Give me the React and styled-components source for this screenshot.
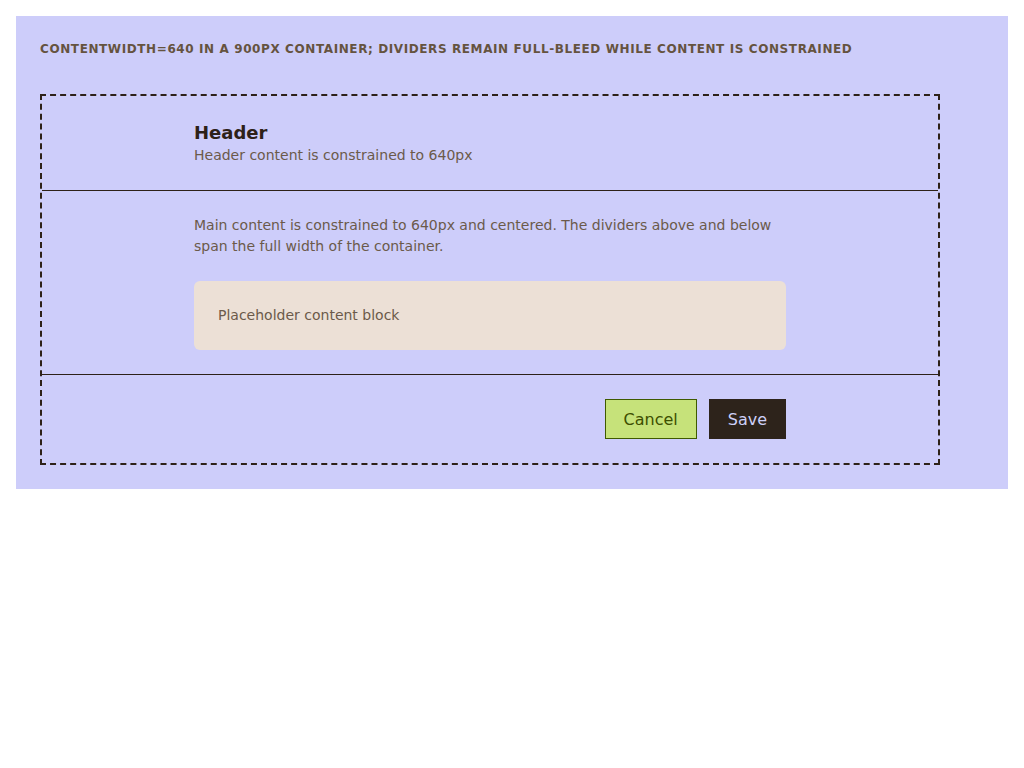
import React from 'react'
import styled, { createGlobalStyle } from 'styled-components'

const GlobalStyle = createGlobalStyle`
  * {
    box-sizing: border-box;
  }

  body {
    margin: 0;
    padding: 16px;
    background: #ffffff;
    font-family: "DejaVu Sans", Verdana, sans-serif;
  }
`

const Stage = styled.div`
  background: #cdcdfa;
  padding: 24px;
`

const Caption = styled.div`
  font-size: 12px;
  line-height: 18px;
  font-weight: 700;
  letter-spacing: 0.6px;
  text-transform: uppercase;
  color: #65533f;
  margin-bottom: 36px;
`

const Frame = styled.div`
  width: 900px;
  border: 2px dashed #2d2118;
  display: flex;
  flex-direction: column;
`

const Section = styled.section`
  border-top: ${p => (p.divider ? '1px solid #2d2118' : 'none')};
`

const Inner = styled.div`
  max-width: 640px;
  margin: 0 auto;
  padding: 24px;
  display: flex;
  flex-direction: column;
  align-items: ${p => (p.end ? 'flex-end' : 'stretch')};
`

const Title = styled.h2`
  margin: 0;
  font-size: 18px;
  line-height: 1.4;
  font-weight: 700;
  color: #2d2118;
`

const Subtitle = styled.p`
  margin: 0;
  font-size: 14px;
  line-height: 1.5;
  color: #6b5a4a;
`

const Text = styled.p`
  margin: 0 0 24px;
  font-size: 14px;
  line-height: 1.5;
  color: #6b5a4a;
`

const Placeholder = styled.div`
  background: #ece0d6;
  border-radius: 6px;
  padding: 24px;
  font-size: 14px;
  line-height: 1.5;
  color: #6b5a4a;
`

const Actions = styled.div`
  display: flex;
  gap: 12px;
`

const Button = styled.button`
  height: 40px;
  padding: 0 18px;
  font-family: inherit;
  font-size: 16px;
  border: 1px solid ${p => (p.primary ? '#2d231b' : '#3f5a00')};
  background: ${p => (p.primary ? '#2d231b' : '#c6e27a')};
  color: ${p => (p.primary ? '#cdd0f8' : '#3d4f00')};
  border-radius: 0;
  cursor: pointer;
`

export default function App() {
  return (
    <>
      <GlobalStyle />
      <Stage>
        <Caption>contentWidth=640 in a 900px container; dividers remain full-bleed while content is constrained</Caption>
        <Frame>
          <Section>
            <Inner>
              <Title>Header</Title>
              <Subtitle>Header content is constrained to 640px</Subtitle>
            </Inner>
          </Section>
          <Section divider>
            <Inner>
              <Text>
                Main content is constrained to 640px and centered. The dividers above and below span the full width of the container.
              </Text>
              <Placeholder>Placeholder content block</Placeholder>
            </Inner>
          </Section>
          <Section divider>
            <Inner end>
              <Actions>
                <Button>Cancel</Button>
                <Button primary>Save</Button>
              </Actions>
            </Inner>
          </Section>
        </Frame>
      </Stage>
    </>
  )
}
